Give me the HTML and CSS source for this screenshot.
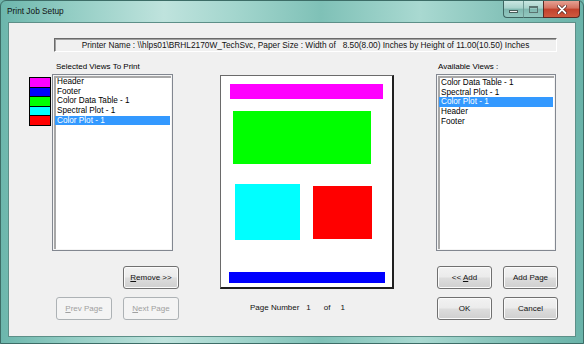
FILE: index.html
```html
<!DOCTYPE html>
<html>
<head>
<meta charset="utf-8">
<link rel="stylesheet" href="styles.css">
</head>
<body>
<div class="window">
  <div class="titlebar">
    <span class="title">Print Job Setup</span>
    <div class="caption-btns">
      <div class="cbtn min"><span class="min-glyph"></span></div>
      <div class="cbtn max"><span class="max-glyph"></span></div>
      <div class="cbtn close">
        <svg width="10" height="9" viewBox="0 0 10 9"><path d="M1.5 1 L8.5 8 M8.5 1 L1.5 8" stroke="#4a1a14" stroke-width="3.2" stroke-linecap="round"/><path d="M1.5 1 L8.5 8 M8.5 1 L1.5 8" stroke="#ffffff" stroke-width="1.8" stroke-linecap="round"/></svg>
      </div>
    </div>
  </div>
  <div class="client">
    <div class="printer-info">Printer Name : \\hlps01\BRHL2170W_TechSvc, Paper Size : Width of &nbsp; 8.50(8.00) Inches by Height of 11.00(10.50) Inches</div>
    <div class="main">
      <div class="col col-left">
        <div class="label label-left">Selected Views To Print</div>
        <div class="list-row">
          <div class="swatches">
            <div class="swatch sw-magenta"></div>
            <div class="swatch sw-blue"></div>
            <div class="swatch sw-green"></div>
            <div class="swatch sw-cyan"></div>
            <div class="swatch sw-red"></div>
          </div>
          <div class="listbox">
            <div class="item">Header</div>
            <div class="item">Footer</div>
            <div class="item">Color Data Table - 1</div>
            <div class="item">Spectral Plot - 1</div>
            <div class="item selected">Color Plot - 1</div>
          </div>
        </div>
        <div class="btn-area">
          <div class="btn-row">
            <div class="btn"><span><u>R</u>emove &gt;&gt;</span></div>
          </div>
          <div class="btn-row">
            <div class="btn disabled"><span><u>P</u>rev Page</span></div>
            <div class="btn disabled"><span><u>N</u>ext Page</span></div>
          </div>
        </div>
      </div>
      <div class="col col-mid">
        <div class="page">
          <div class="blk blk-header"></div>
          <div class="blk blk-table"></div>
          <div class="blk blk-spectral"></div>
          <div class="blk blk-plot"></div>
          <div class="blk blk-footer"></div>
        </div>
        <div class="page-number"><span>Page Number</span><span class="pn-cur">1</span><span class="pn-of">of</span><span class="pn-tot">1</span></div>
      </div>
      <div class="col col-right">
        <div class="label label-right">Available Views :</div>
        <div class="listbox listbox-right">
          <div class="item">Color Data Table - 1</div>
          <div class="item">Spectral Plot - 1</div>
          <div class="item selected">Color Plot - 1</div>
          <div class="item">Header</div>
          <div class="item">Footer</div>
        </div>
        <div class="btn-area btn-area-right">
          <div class="btn-row">
            <div class="btn btn-r"><span>&lt;&lt; <u>A</u>dd</span></div>
            <div class="btn btn-r"><span>Add Page</span></div>
          </div>
          <div class="btn-row">
            <div class="btn btn-r"><span>OK</span></div>
            <div class="btn btn-r"><span>Cancel</span></div>
          </div>
        </div>
      </div>
    </div>
  </div>
</div>
</body>
</html>
```

FILE: styles.css
```css
* { box-sizing: border-box; }
html, body { margin: 0; padding: 0; }
body {
  width: 584px;
  height: 344px;
  overflow: hidden;
  font-family: "Liberation Sans", Arial, sans-serif;
  font-size: 8px;
  color: #000;
  background: #6fb5ab;
}
.window {
  width: 584px;
  height: 344px;
  border: 1px solid #3d6d67;
  border-radius: 6px 6px 0 0;
  background: linear-gradient(90deg, #6cb6ac 0%, #93cdc4 12%, #bfe3dd 28%, #a4d6ce 40%, #7fc1b7 55%, #a9d9d1 72%, #86c3ba 86%, #6ab3a9 100%);
  display: flex;
  flex-direction: column;
}
.titlebar {
  height: 21px;
  display: flex;
  justify-content: space-between;
  align-items: flex-start;
  padding-left: 6px;
}
.title {
  font-size: 8.3px;
  line-height: 21px;
  color: #111;
}
.caption-btns {
  display: flex;
  margin-right: 3px;
}
.cbtn {
  height: 17px;
  display: flex;
  align-items: center;
  justify-content: center;
  border: 1px solid #3e6460;
  border-top: none;
}
.min {
  width: 20px;
  border-radius: 0 0 0 4px;
  background: linear-gradient(#c9e6e1 0%, #a7d2cb 45%, #7fb8b0 50%, #94c8c0 100%);
  border-right: none;
}
.max {
  width: 20px;
  background: linear-gradient(#c9e6e1 0%, #a7d2cb 45%, #7fb8b0 50%, #94c8c0 100%);
  border-left: 1px solid #6f9893;
  border-right: none;
}
.close {
  width: 37px;
  border-radius: 0 0 4px 0;
  background: linear-gradient(#e6a193 0%, #d4715f 45%, #c2412c 50%, #cf5a3f 100%);
  border-color: #5b2b24;
}
.min-glyph {
  width: 9px;
  height: 3px;
  margin-top: 5px;
  background: #f4f4f4;
  border: 1px solid #485e5b;
}
.max-glyph {
  width: 9px;
  height: 7px;
  border: 1px solid #5b7471;
  border-top-width: 2px;
}
.client {
  margin: 0 7px;
  height: 315px;
  background: #f0f0f0;
  border: 1px solid #5d8f88;
}
.printer-info {
  margin: 15px 0 0 45px;
  width: 503px;
  height: 14px;
  border: 1px solid;
  border-color: #6a6a6a #ffffff #ffffff #6a6a6a;
  box-shadow: inset 1px 1px 0 #a0a0a0;
  text-align: center;
  font-size: 8.3px;
  line-height: 12px;
  white-space: nowrap;
  color: #111;
}
.main {
  display: flex;
  margin: 9px 0 0 20px;
}
.col { display: flex; flex-direction: column; }
.col-left { width: 150px; }
.col-mid { width: 174px; margin-left: 41px; }
.col-right { width: 124px; margin-left: 41px; }
.label {
  height: 13px;
  line-height: 11px;
  white-space: nowrap;
}
.label-left { padding-left: 27px; }
.label-right { padding-left: 3px; }
.list-row { display: flex; gap: 1px; }
.swatches {
  width: 22px;
  margin-top: 3px;
  align-self: flex-start;
  border: 1px solid #000;
  border-bottom: none;
}
.swatch {
  height: 9.6px;
  border-bottom: 1px solid #000;
}
.sw-magenta { background: #ff00ff; }
.sw-blue { background: #0000ff; }
.sw-green { background: #00ff00; }
.sw-cyan { background: #00ffff; }
.sw-red { background: #ff0000; }
.listbox {
  width: 121px;
  height: 177px;
  background: #fff;
  border: 1px solid #828790;
  box-shadow: inset 0 0 0 1px #f4f4f4, inset 1px 1px 0 2px #a8a8a8;
  padding: 2px 2px 0 2px;
}
.listbox-right {
  width: 120px;
  margin-left: 1px;
  padding-top: 3px;
}
.item {
  height: 9.7px;
  line-height: 9.7px;
  padding-left: 2px;
  white-space: nowrap;
  font-size: 8.2px;
}
.item.selected {
  background: #3399ff;
  color: #fff;
}
.btn-area { margin-top: 15px; display: flex; flex-direction: column; gap: 8px; }
.btn-row { display: flex; justify-content: flex-end; gap: 11px; }
.btn-area-right .btn-row { justify-content: flex-start; padding-left: 2px; }
.btn {
  width: 56px;
  height: 23px;
  border: 1px solid #707070;
  border-radius: 3px;
  background: linear-gradient(#f2f2f2 0%, #ebebeb 48%, #dddddd 52%, #cfcfcf 100%);
  box-shadow: inset 0 0 0 1px #fbfbfb;
  display: flex;
  align-items: center;
  justify-content: center;
  white-space: nowrap;
  color: #111;
}
.btn-r { width: 55px; }
.btn.disabled {
  border-color: #adb2b5;
  background: #f4f4f4;
  box-shadow: none;
  color: #a0a0a0;
}
.page {
  position: relative;
  margin-top: 14px;
  width: 174px;
  height: 214px;
  background: #fff;
  border: 1px solid #6a6a6a;
  border-right: 2px solid #202020;
  border-bottom: 2px solid #202020;
}
.blk { position: absolute; }
.blk-header { left: 9px; top: 8px; width: 153px; height: 15px; background: #ff00ff; }
.blk-table { left: 12px; top: 35px; width: 138px; height: 53px; background: #00ff00; }
.blk-spectral { left: 14px; top: 108px; width: 65px; height: 56px; background: #00ffff; }
.blk-plot { left: 92px; top: 110px; width: 59px; height: 53px; background: #ff0000; }
.blk-footer { left: 8px; top: 196px; width: 156px; height: 11px; background: #0000ff; }
.page-number {
  margin-top: 12px;
  padding-left: 30px;
  line-height: 13px;
  white-space: nowrap;
  display: flex;
  color: #111;
}
.pn-cur { margin-left: 7px; }
.pn-of { margin-left: 13px; }
.pn-tot { margin-left: 10px; }
```
